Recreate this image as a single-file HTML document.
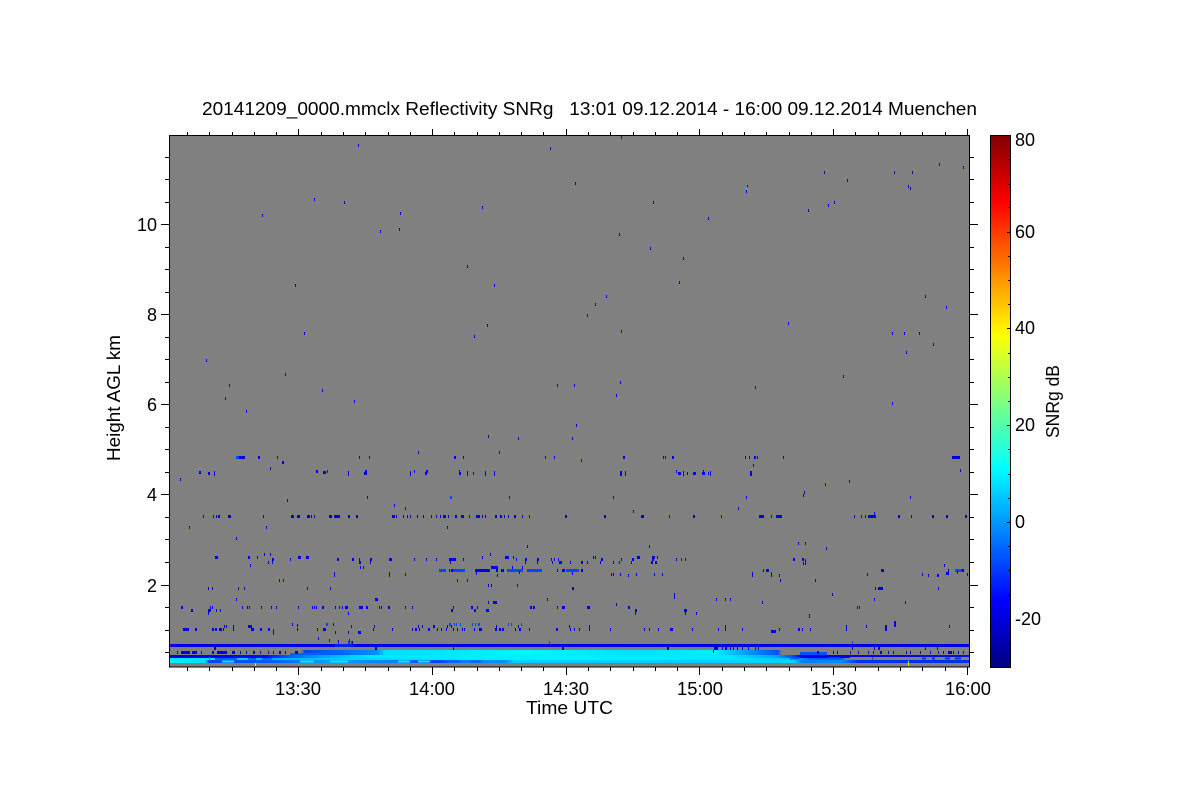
<!DOCTYPE html>
<html><head><meta charset="utf-8"><title>SNRg</title>
<style>html,body{margin:0;padding:0;background:#fff}svg{display:block}text{font-family:"Liberation Sans",sans-serif;fill:#000;font-size:18px}</style></head>
<body>
<svg width="1200" height="800" viewBox="0 0 1200 800" xmlns="http://www.w3.org/2000/svg">
<defs>
<linearGradient id="jet" x1="0" y1="0" x2="0" y2="1">
<stop offset="0" stop-color="#800000"/><stop offset=".125" stop-color="#ff0000"/><stop offset=".375" stop-color="#ffff00"/><stop offset=".5" stop-color="#80ff80"/><stop offset=".625" stop-color="#00ffff"/><stop offset=".875" stop-color="#0000ff"/><stop offset="1" stop-color="#000080"/>
</linearGradient>
<linearGradient id="rA" gradientUnits="userSpaceOnUse" x1="169" y1="0" x2="970" y2="0">
<stop offset="0" stop-color="#808080"/><stop offset=".165" stop-color="#808080"/><stop offset=".17" stop-color="#0040f0"/><stop offset=".22" stop-color="#0070ff"/><stop offset=".26" stop-color="#0090ff"/><stop offset=".27" stop-color="#00e0ff"/><stop offset=".36" stop-color="#00e8ff"/><stop offset=".45" stop-color="#00f8ff"/><stop offset=".58" stop-color="#00e0ff"/><stop offset=".68" stop-color="#00f0ff"/><stop offset=".72" stop-color="#00a0ff"/><stop offset=".76" stop-color="#0050ff"/><stop offset=".765" stop-color="#808080"/><stop offset="1" stop-color="#808080"/>
</linearGradient>
<linearGradient id="rB" gradientUnits="userSpaceOnUse" x1="169" y1="0" x2="970" y2="0">
<stop offset="0" stop-color="#0000e0"/><stop offset=".12" stop-color="#0010f0"/><stop offset=".15" stop-color="#0060ff"/><stop offset=".19" stop-color="#00a0ff"/><stop offset=".25" stop-color="#00e8ff"/><stop offset=".5" stop-color="#00f0ff"/><stop offset=".7" stop-color="#00e8ff"/><stop offset=".76" stop-color="#00a0ff"/><stop offset=".78" stop-color="#0040ff"/><stop offset=".79" stop-color="#0000f0"/><stop offset="1" stop-color="#0010e0"/>
</linearGradient>
<linearGradient id="rC" gradientUnits="userSpaceOnUse" x1="169" y1="0" x2="970" y2="0">
<stop offset="0" stop-color="#00e8ff"/><stop offset=".08" stop-color="#00d8ff"/><stop offset=".13" stop-color="#00b0ff"/><stop offset=".25" stop-color="#00d8ff"/><stop offset=".4" stop-color="#00f0ff"/><stop offset=".6" stop-color="#00f0ff"/><stop offset=".72" stop-color="#00e0ff"/><stop offset=".78" stop-color="#00c0ff"/><stop offset=".8" stop-color="#0060ff"/><stop offset=".84" stop-color="#0060ff"/><stop offset=".845" stop-color="#808080"/><stop offset="1" stop-color="#808080"/>
</linearGradient>
<linearGradient id="rD" gradientUnits="userSpaceOnUse" x1="169" y1="0" x2="970" y2="0">
<stop offset="0" stop-color="#00f0ff"/><stop offset=".045" stop-color="#00e0ff"/><stop offset=".05" stop-color="#0040f0"/><stop offset=".13" stop-color="#0060ff"/><stop offset=".2" stop-color="#00a0ff"/><stop offset=".28" stop-color="#0080ff"/><stop offset=".335" stop-color="#0040f0"/><stop offset=".36" stop-color="#0080ff"/><stop offset=".42" stop-color="#0090ff"/><stop offset=".43" stop-color="#00d0ff"/><stop offset=".66" stop-color="#00d0ff"/><stop offset=".78" stop-color="#00d8ff"/><stop offset=".79" stop-color="#0080ff"/><stop offset=".84" stop-color="#0090ff"/><stop offset=".86" stop-color="#0030f0"/><stop offset="1" stop-color="#0030f0"/>
</linearGradient>
</defs>

<rect x="169" y="135" width="801" height="532" fill="#808080"/>

<g shape-rendering="crispEdges" fill="none">
<!-- near-ground bands -->
<rect x="169" y="650" width="801" height="5" fill="url(#rA)"/>
<rect x="169" y="655" width="801" height="3" fill="url(#rB)"/>
<rect x="169" y="658" width="801" height="2" fill="url(#rC)"/>
<rect x="169" y="660" width="801" height="3" fill="url(#rD)"/>
<rect x="169" y="644" width="801" height="3" fill="#0000e6"/>
<rect x="335" y="644" width="18" height="3" fill="#0020f0"/>
<rect x="800" y="652" width="27" height="3" fill="#0050ff"/>
<rect x="290" y="653" width="60" height="2" fill="#0060ff"/>
<path stroke="#0040ff" stroke-width="3" d="M338 642.5h1M348 642.5h2M351 642.5h2M549 642.5h1M852 642.5h1"/>
<path stroke="#0000e0" stroke-width="3" d="M214 648.5h2M375 648.5h2M453 648.5h1M562 648.5h2M667 648.5h2M714 648.5h4M722 648.5h1M725 648.5h2M730 648.5h1M733 648.5h1M737 648.5h1M742 648.5h1M748 648.5h1M755 648.5h1M758 648.5h1M874 648.5h1M878 648.5h2M925 648.5h1M937 648.5h1M852 648.5h1
M177 652.5h1M181 652.5h9M192 652.5h5M201 652.5h1M212 652.5h2M217 652.5h10M232 652.5h3M240 652.5h1M246 652.5h1M253 652.5h2M260 652.5h1M268 652.5h1M273 652.5h1M279 652.5h2M285 652.5h1M295 652.5h3M713 651.5h1M817 652.5h2M833 652.5h1M837 652.5h1M850 652.5h1M858 652.5h1M868 652.5h1M873 652.5h1M880 652.5h2M888 652.5h1M893 652.5h1M906 652.5h1M910 652.5h1M920 652.5h1M930 652.5h1M938 652.5h1M943 652.5h1M948 652.5h4M953 652.5h1M958 652.5h1M963 652.5h1"/>
<path stroke="#808080" stroke-width="3" d="M850 658.5h120"/>
<path stroke="#0030f0" stroke-width="2" d="M872 658.5h1M922 658.5h4M932 658.5h3M945 658.5h5M955 658.5h6"/>
<path stroke="#0060ff" stroke-width="2" d="M215 659h22M248 659h8M262 659h10M450 661.5h10M470 661.5h12M790 658.5h9M828 658.5h12"/>
<path stroke="#00f0ff" stroke-width="2" d="M222 661.5h12M300 661.5h14M330 661.5h18M398 661.5h12M418 661.5h12"/>
<path stroke="#a0ff90" stroke-width="3" d="M255 664.5h1"/>
<path stroke="#b0ff20" stroke-width="5" d="M908 663.5h1"/>
<path stroke="#906030" stroke-width="4" d="M209 659h1"/>

<!-- light blue echoes -->
<path stroke="#0048ff" stroke-width="3" d="M236 457.5h3M450 497.5h2M326 624.5h2M449 624.5h2M454 624.5h1M456 624.5h1M460 624.5h1M472 624.5h1M475 624.5h1M478 624.5h2M508 624.5h1M511 624.5h1M521 624.5h1M439 570.5h7M453 570.5h12M507 570.5h16M527 570.5h15M566 570.5h13M955 570.5h7"/>

<!-- upper scattered -->
<path stroke="#0000dc" stroke-width="3" d="M358 145.5h1M550 148.5h1M314 199.5h1M344 202.5h1M262 215.5h1M400 213.5h1M482 207.5h1M380 231.5h1M399 229.5h1M467 266.5h1M295 285.5h1M494 285.5h1M487 325.5h1M304 333.5h1M474 336.5h1M206 360.5h1M285 374.5h1M229 385.5h1M557 385.5h1M322 390.5h1M225 398.5h1M354 401.5h1M246 411.5h1M488 436.5h1M518 438.5h1
M621 137.5h1M575 183.5h1M747 186.5h1M746 191.5h1M824 172.5h1M847 180.5h1M894 172.5h1M912 172.5h1M939 164.5h1M963 167.5h1M908 186.5h1M910 188.5h1M653 202.5h1M834 202.5h1M828 205.5h1M808 210.5h1M708 218.5h1M619 234.5h1M650 248.5h1M683 258.5h1M679 282.5h1M606 296.5h1M595 304.5h1M587 315.5h1M621 331.5h1M925 296.5h1M946 307.5h1M788 323.5h1M892 333.5h1M904 333.5h1M919 333.5h1M933 344.5h1M906 352.5h1M843 376.5h1M574 385.5h1M620 382.5h1M616 395.5h1M755 387.5h1M892 403.5h1M576 425.5h1M572 438.5h1"/>
<path stroke="#00e0ff" stroke-width="3" d="M746.5 188.5h1"/>

<!-- main echoes -->
<path stroke="#0000e0" stroke-width="3" d="
M418 452.5h1M499 452.5h1
M239 457.5h6M258 457.5h2M277 457.5h1M359 457.5h1M369 457.5h1M454 457.5h2M463 457.5h1M545 457.5h1M554 457.5h1M623 457.5h2M663 457.5h1M665 457.5h1M672 457.5h2M745 457.5h1M749 457.5h1M754 457.5h2M757 457.5h1M783 457.5h1M952 457.5h8
M581 460.5h1M282 462.5h2M753 465.5h1M270 468.5h1
M199 472.5h2M208 473.5h2M214 472.5h1M214 474.5h1M316 471.5h2M323 472.5h3M327 471.5h1M348 472.5h1M348 474.5h1M364 473.5h3M365 471.5h2M410 472.5h1M410 474.5h1M414 471.5h1M425 473.5h2M426 471.5h2M459 471.5h1M459 473.5h2M467 472.5h1M467 474.5h1M473 473.5h1M485 472.5h1M485 474.5h1M494 472.5h1M494 474.5h1M620 472.5h2M620 474.5h2M625 472.5h1M625 474.5h1M676 471.5h1M678 473.5h3M683 472.5h1M683 474.5h1M687 473.5h1M693 473.5h3M702 473.5h3M703 471.5h1M708 473.5h1M710 472.5h1M710 474.5h1M750 472.5h2M750 474.5h2M960 470.5h1
M180 479.5h1M825 484.5h1M849 481.5h1M804 492.5h1M803 495.5h1M287 500.5h1M367 497.5h1M509 497.5h1M613 497.5h1M746 497.5h1M910 497.5h1M394 505.5h1M405 508.5h1M738 508.5h1M633 511.5h1
M203 516.5h1M213 516.5h1M216 516.5h1M218 516.5h2M228 516.5h3M263 516.5h1M291 516.5h2M293 516.5h1M297 516.5h3M307 516.5h3M311 516.5h1M314 516.5h1M329 516.5h3M334 516.5h6M348 516.5h2M356 516.5h2M392 516.5h3M396 516.5h1M403 516.5h1M407 516.5h1M410 516.5h1M417 516.5h1M423 516.5h1M431 516.5h1M436 516.5h1M440 516.5h1M443 516.5h3M448 516.5h1M455 516.5h2M461 516.5h2M463 516.5h1M469 516.5h1M476 516.5h4M482 516.5h1M485 516.5h1M495 516.5h2M500 516.5h2M504 516.5h1M508 516.5h1M514 516.5h2M522 516.5h1M529 516.5h1M565 516.5h2M604 516.5h2M641 516.5h3M669 516.5h1M693 516.5h2M721 516.5h1M759 516.5h5M771 516.5h1M776 516.5h6M854 516.5h1M861 516.5h1M865 516.5h1M868 516.5h8M874 513.5h1M898 516.5h2M911 516.5h1M932 516.5h2M946 516.5h2M965 516.5h2
M189 527.5h1M266 527.5h1M447 527.5h1M236 538.5h1M798 543.5h1M805 543.5h1M527 546.5h1M649 546.5h1M826 548.5h1M264 554.5h1M270 554.5h1M490 554.5h1
M215 557.5h3M248 557.5h2M257 557.5h1M298 557.5h3M306 557.5h3M482 557.5h1M513 557.5h1M505 557.5h4M593 557.5h1M595 557.5h1M637 557.5h3M652 557.5h3M657 557.5h1
M272 559.5h2M290 559.5h1M337 559.5h2M352 559.5h2M359 559.5h1M370 559.5h2M389 559.5h3M414 559.5h1M426 559.5h1M436 559.5h1M449 559.5h4M453 559.5h3M463 559.5h1M516 559.5h1M525 559.5h2M537 559.5h2M551 559.5h1M554 559.5h1M558 559.5h1M601 559.5h2M621 559.5h1M632 559.5h2M652 559.5h2M676 559.5h1M681 559.5h1M685 559.5h1M793 559.5h2M802 559.5h2M805 560.5h1
M268 562.5h1M272 562.5h1M359 562.5h2M370 562.5h1M450 562.5h1M525 562.5h1M537 562.5h1M552 562.5h1M559 562.5h2M561 562.5h1M570 562.5h1M581 562.5h2M587 562.5h1M600 562.5h1M613 562.5h1M619 562.5h1M631 562.5h1M651 562.5h2M655 562.5h2M803 563.5h1M805 563.5h1M250 565.5h1M944 565.5h1
M360 567.5h1M363 567.5h1M491 567.5h7M512 567.5h1M522 567.5h1
M449 570.5h1M451 570.5h2M475 570.5h15M496 570.5h2M501 570.5h3M557 570.5h1M562 570.5h3M581 570.5h2M763 570.5h1M766 570.5h3M881 570.5h3M962 570.5h2
M334 573.5h1M334 575.5h1M389 573.5h1M389 575.5h1M405 574.5h1M476 573.5h1M497 575.5h1M519 572.5h1M572 573.5h1M611 574.5h1M613 574.5h1M620 574.5h1M628 575.5h1M636 574.5h1M654 574.5h1M662 574.5h1M752 573.5h1M752 575.5h1M771 573.5h1M771 575.5h1M779 575.5h1M867 574.5h1M922 574.5h1M928 575.5h1M937 575.5h2M946 573.5h3M948 570.5h1M957 572.5h1M967 574.5h1
M279 580.5h1M283 580.5h1M457 580.5h1M467 580.5h1M780 580.5h1M815 580.5h1M488 585.5h1M491 585.5h1M517 585.5h1
M208 588.5h1M212 588.5h1M238 588.5h1M244 588.5h1M307 588.5h1M330 588.5h1M572 588.5h2M875 588.5h1M878 588.5h5M938 588.5h1
M236 599.5h1M375 599.5h3M547 599.5h1M674 594.5h1M674 597.5h1M832 594.5h1M716 599.5h1M725 599.5h1M730 599.5h1M874 599.5h1
M488 602.5h1M493 602.5h4M762 602.5h1M905 602.5h1M809 615.5h1
M181 607.5h2M210 607.5h1M212 607.5h1M242 607.5h1M247 607.5h1M249 607.5h1M261 607.5h1M271 607.5h1M276 607.5h1M298 607.5h1M312 607.5h1M314 607.5h1M316 607.5h1M322 607.5h2M335 607.5h1M339 607.5h1M342 607.5h1M345 607.5h3M359 607.5h3M362 607.5h1M366 607.5h2M379 607.5h1M381 607.5h1M388 607.5h2M405 607.5h1M412 607.5h1M453 607.5h1M471 607.5h2M477 607.5h1M530 607.5h2M533 607.5h2M557 607.5h1M562 607.5h3M587 607.5h2M589 607.5h1M628 607.5h2M857 607.5h1M859 607.5h1
M191 610.5h2M208 610.5h3M216 610.5h1M220 610.5h1M451 610.5h2M474 610.5h2M486 610.5h3M616 604.5h1M635 610.5h2M684 610.5h3M208 613.5h1M348 613.5h1M635 613.5h1M696 613.5h1M685 613.5h1
M809 616.5h1M292 624.5h1M333 624.5h1M894 622.5h2M894 625.5h2
M224 626.5h1M226 626.5h1M233 626.5h1M248 626.5h4M297 625.5h1M351 626.5h1M374 626.5h1M418 626.5h1M422 626.5h1M433 626.5h2M447 626.5h1M451 626.5h1M496 626.5h1M518 626.5h1M569 626.5h1M589 626.5h1M725 626.5h1M846 626.5h1M866 626.5h1M885 626.5h2M949 626.5h1
M183 629.5h4M187 629.5h2M195 629.5h2M212 629.5h2M215 629.5h2M219 629.5h3M223 629.5h1M233 629.5h1M251 629.5h3M260 629.5h2M268 629.5h2M273 630.5h1M297 629.5h1M317 629.5h1M323 629.5h3M373 629.5h1M392 629.5h1M412 629.5h1M415 629.5h2M419 629.5h1M428 629.5h2M437 629.5h1M441 629.5h1M446 629.5h1M453 629.5h1M457 629.5h1M462 629.5h1M464 629.5h1M474 629.5h1M479 629.5h3M495 629.5h2M499 629.5h2M502 629.5h2M515 629.5h1M519 629.5h2M529 629.5h1M556 629.5h2M570 629.5h1M574 629.5h1M579 629.5h1M589 629.5h1M610 629.5h1M644 629.5h1M649 629.5h1M658 629.5h1M670 629.5h3M692 629.5h1M718 629.5h1M725 629.5h1M742 629.5h1M779 629.5h1M798 629.5h2M802 629.5h1M810 629.5h1M846 629.5h1M885 629.5h2M771 631.5h5
M273 633.5h1M335 632.5h1M348 632.5h1M358 632.5h3
M318 638.5h1M329 640.5h1M349 640.5h1M352 642.5h1M338 641.5h1"/>
</g>

<!-- axes -->
<g shape-rendering="crispEdges" stroke="#000" stroke-width="1" fill="none">
<rect x="169.5" y="135.5" width="800" height="531.5"/>
<path d="M187.5 667v4M209.5 667v4M232.5 667v4M254.5 667v4M276.5 667v4M298.5 667v8M321.5 667v4M343.5 667v4M365.5 667v4M388.5 667v4M410.5 667v4M432.5 667v8M454.5 667v4M477.5 667v4M499.5 667v4M521.5 667v4M543.5 667v4M566.5 667v8M588.5 667v4M610.5 667v4M633.5 667v4M655.5 667v4M677.5 667v4M699.5 667v8M722.5 667v4M744.5 667v4M766.5 667v4M789.5 667v4M811.5 667v4M833.5 667v8M855.5 667v4M878.5 667v4M900.5 667v4M922.5 667v4M945.5 667v4M967.5 667v8"/>
<path d="M187.5 135v-3M209.5 135v-3M232.5 135v-3M254.5 135v-3M276.5 135v-3M298.5 135v-6M321.5 135v-3M343.5 135v-3M365.5 135v-3M388.5 135v-3M410.5 135v-3M432.5 135v-6M454.5 135v-3M477.5 135v-3M499.5 135v-3M521.5 135v-3M543.5 135v-3M566.5 135v-6M588.5 135v-3M610.5 135v-3M633.5 135v-3M655.5 135v-3M677.5 135v-3M699.5 135v-6M722.5 135v-3M744.5 135v-3M766.5 135v-3M789.5 135v-3M811.5 135v-3M833.5 135v-6M855.5 135v-3M878.5 135v-3M900.5 135v-3M922.5 135v-3M945.5 135v-3M967.5 135v-6"/>
<path d="M165 157.5h4M165 179.5h4M165 202.5h4M161 224.5h8M165 247.5h4M165 269.5h4M165 292.5h4M161 314.5h8M165 337.5h4M165 359.5h4M165 382.5h4M161 404.5h8M165 427.5h4M165 449.5h4M165 472.5h4M161 494.5h8M165 517.5h4M165 539.5h4M165 562.5h4M161 585.5h8M165 607.5h4M165 630.5h4M165 652.5h4"/>
<path d="M970 157.5h4M970 179.5h4M970 202.5h4M970 224.5h8M970 247.5h4M970 269.5h4M970 292.5h4M970 314.5h8M970 337.5h4M970 359.5h4M970 382.5h4M970 404.5h8M970 427.5h4M970 449.5h4M970 472.5h4M970 494.5h8M970 517.5h4M970 539.5h4M970 562.5h4M970 585.5h8M970 607.5h4M970 630.5h4M970 652.5h4"/>
<rect x="990.5" y="135.5" width="20" height="532" fill="url(#jet)"/>
<path d="M1010 159.5h-2M1010 184.5h-2M1010 207.5h-2M1010 232.5h-3M1010 256.5h-2M1010 280.5h-2M1010 304.5h-2M1010 328.5h-3M1010 353.5h-2M1010 377.5h-2M1010 401.5h-2M1010 425.5h-3M1010 449.5h-2M1010 474.5h-2M1010 498.5h-2M1010 522.5h-3M1010 546.5h-2M1010 570.5h-2M1010 595.5h-2M1010 619.5h-3M1010 643.5h-2"/>
</g>

<!-- text -->
<text x="202" y="115" textLength="775" lengthAdjust="spacingAndGlyphs" xml:space="preserve">20141209_0000.mmclx Reflectivity SNRg   13:01 09.12.2014 - 16:00 09.12.2014 Muenchen</text>
<text x="298" y="695" text-anchor="middle" textLength="46" lengthAdjust="spacingAndGlyphs">13:30</text>
<text x="432" y="695" text-anchor="middle" textLength="46" lengthAdjust="spacingAndGlyphs">14:00</text>
<text x="566" y="695" text-anchor="middle" textLength="46" lengthAdjust="spacingAndGlyphs">14:30</text>
<text x="700" y="695" text-anchor="middle" textLength="46" lengthAdjust="spacingAndGlyphs">15:00</text>
<text x="834" y="695" text-anchor="middle" textLength="46" lengthAdjust="spacingAndGlyphs">15:30</text>
<text x="968" y="695" text-anchor="middle" textLength="46" lengthAdjust="spacingAndGlyphs">16:00</text>
<text x="526" y="714" textLength="87" lengthAdjust="spacingAndGlyphs">Time UTC</text>
<text x="157" y="231" text-anchor="end">10</text>
<text x="157" y="321" text-anchor="end">8</text>
<text x="157" y="411" text-anchor="end">6</text>
<text x="157" y="501" text-anchor="end">4</text>
<text x="157" y="592" text-anchor="end">2</text>
<text transform="translate(120 461) rotate(-90)" textLength="126" lengthAdjust="spacingAndGlyphs">Height AGL km</text>
<text x="1015" y="146">80</text>
<text x="1015" y="238">60</text>
<text x="1015" y="334">40</text>
<text x="1015" y="431">20</text>
<text x="1015" y="528">0</text>
<text x="1015" y="625">-20</text>
<text transform="translate(1059 438) rotate(-90)" textLength="73" lengthAdjust="spacingAndGlyphs">SNRg dB</text>
</svg>
</body></html>
